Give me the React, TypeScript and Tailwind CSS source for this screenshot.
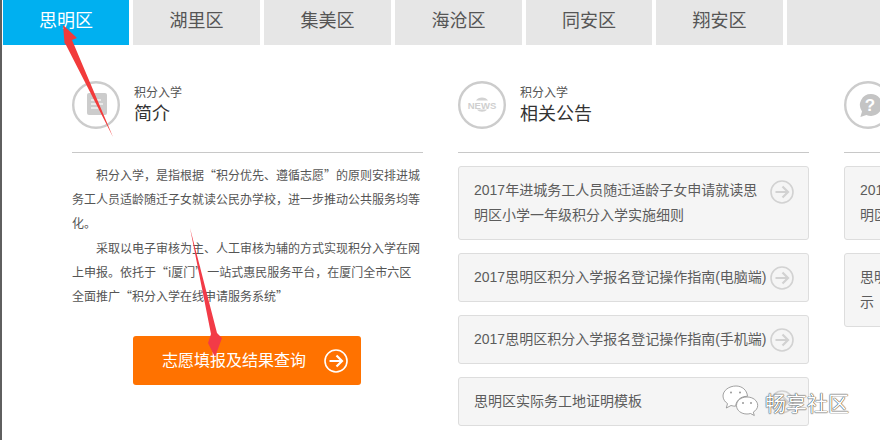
import React from 'react';

const tabs = ['思明区', '湖里区', '集美区', '海沧区', '同安区', '翔安区', ''];

const notices = [
  { title: '2017年进城务工人员随迁适龄子女申请就读思明区小学一年级积分入学实施细则', tall: true },
  { title: '2017思明区积分入学报名登记操作指南(电脑端)', tall: false },
  { title: '2017思明区积分入学报名登记操作指南(手机端)', tall: false },
  { title: '思明区实际务工地证明模板', tall: false },
];

const faqs = [
  '2017年进城务工人员随迁适龄子女申请就读思明区小学一年级积分入学实施细则',
  '思明区积分入学报名登记操作流程及相关材料公示',
];

const ArrowCircle = ({ color = '#d2d2d2', size = 24 }: { color?: string; size?: number }) => (
  <svg width={size} height={size} viewBox="0 0 24 24" fill="none" className="shrink-0">
    <circle cx="12" cy="12" r="11" stroke={color} strokeWidth="1.6" />
    <path d="M5.500 12h12M12.500 6.500l5.500 5.500-5.500 5.500" stroke={color} strokeWidth="2.200" />
  </svg>
);

const DocIcon = () => (
  <svg width="48" height="48" viewBox="0 0 48 48" fill="none">
    <circle cx="24" cy="24" r="22.800" stroke="#cccccc" strokeWidth="2.400" />
    <rect x="15" y="12" width="20" height="22" rx="2" fill="#cccccc" />
    <path d="M19 19h10M19 23h12M19 27h8" stroke="#f2f2f2" strokeWidth="1.600" />
  </svg>
);

const NewsIcon = () => (
  <svg width="48" height="48" viewBox="0 0 48 48" fill="none">
    <circle cx="24" cy="24" r="22.800" stroke="#cccccc" strokeWidth="2.400" />
    <path d="M18 19.500c2-4 10-4 12 0zM19 28.500c2 3 8 3 10 0z" fill="#d2d2d2" />
    <text x="24" y="27.500" textAnchor="middle" fontSize="9.500" fontWeight="700" fill="#cfcfcf" fontFamily="Liberation Sans, sans-serif">
      NEWS
    </text>
  </svg>
);

const QuestionIcon = () => (
  <svg width="48" height="48" viewBox="0 0 48 48" fill="none">
    <circle cx="24" cy="24" r="22.800" stroke="#cccccc" strokeWidth="2.400" />
    <path d="M27 13a11 11 0 1 1-4.600 21l-6 2 1.600-5.600A11 11 0 0 1 27 13z" fill="#c4c4c4" />
    <text x="26" y="30" textAnchor="middle" fontSize="17" fontWeight="700" fill="#ffffff" fontFamily="Liberation Sans, sans-serif">
      ?
    </text>
  </svg>
);

const SectionHead = ({ icon, title }: { icon: React.ReactNode; title?: string }) => (
  <div className="flex items-start gap-[14px] h-[72px] border-b border-[#c8c8c8]">
    {icon}
    {title && (
      <div className="pt-[3px]">
        <div className="text-xs leading-[18px] text-[#555]">积分入学</div>
        <div className="text-lg leading-[24px] text-[#333]">{title}</div>
      </div>
    )}
  </div>
);

const NoticeCard = ({ title, tall }: { title: string; tall: boolean }) => (
  <div className="flex items-center pl-[15px] pr-[14px] bg-[#f5f5f5] border border-[#dddddd] rounded-[3px] text-sm leading-[25px] text-[#5c5c5c]">
    <div className="flex-1 py-[11px]">{title}</div>
    <div className={tall ? 'self-start mt-[13px]' : ''}>
      <ArrowCircle />
    </div>
  </div>
);

const WeChatMark = () => (
  <svg width="38" height="32" viewBox="0 0 38 32" fill="#ffffff" stroke="#8a8a8a" strokeWidth="0.800">
    <path d="M14 1C7 1 1 5.500 1 11c0 3 1.800 5.800 4.500 7.600L4.300 23l4.700-2.500c1.500.5 3 .7 4.500.7 0 0 1-10 12-10C25 5 20 1 14 1z" />
    <path d="M25 12c-6 0-10.500 3.700-10.500 8.500S19 29 25 29c1.200 0 2.400-.2 3.500-.5l3.800 2-1-3.400c2.700-1.600 4.400-4 4.400-6.600C35.700 15.700 31 12 25 12z" />
    <circle cx="9" cy="7.500" r="1" fill="#999" stroke="none" />
    <circle cx="18" cy="7.500" r="1" fill="#999" stroke="none" />
    <circle cx="21" cy="18" r="1" fill="#999" stroke="none" />
    <circle cx="29" cy="18" r="1" fill="#999" stroke="none" />
  </svg>
);

export default function App() {
  return (
    <div className="relative w-[880px] h-[440px] overflow-hidden bg-white flex font-['Liberation_Sans','Noto_Sans_CJK_SC',sans-serif]">
      <div className="w-[2px] shrink-0 bg-[#5f5f5f]" />
      <div className="flex-1 min-w-0 pl-px">
        <div className="flex gap-1 h-[45px]">
          {tabs.map((tab, i) => (
            <div
              key={i}
              className={`shrink-0 flex items-center justify-center pb-[4px] text-lg ${
                i === 0 || i === 4 ? 'w-[126px]' : 'w-[127px]'
              } ${i === 0 ? 'bg-[#00b0f0] text-white' : 'bg-[#e6e6e6] text-[#555]'}`}
            >
              {tab}
            </div>
          ))}
        </div>

        <div className="flex gap-[35px] pl-[69px] pt-[36px]">
          <div className="w-[351px] shrink-0">
            <SectionHead icon={<DocIcon />} title="简介" />
            <div className="pt-[10px] pr-[2px] text-xs leading-[24.200px] text-[#555] font-['Noto_Sans_CJK_SC',sans-serif]">
              <p className="indent-[24px]">
                积分入学，是指根据“积分优先、遵循志愿”的原则安排进城务工人员适龄随迁子女就读公民办学校，进一步推动公共服务均等化。
              </p>
              <p className="indent-[24px]">
                采取以电子审核为主、人工审核为辅的方式实现积分入学在网上申报。依托于“i厦门”一站式惠民服务平台，在厦门全市六区全面推广“积分入学在线申请服务系统”
              </p>
            </div>
            <div className="ml-[61px] mt-[28px] w-[228px] h-[49px] flex items-center gap-[18px] pl-[29px] rounded-[3px] bg-[#ff7200] text-white text-base">
              <span>志愿填报及结果查询</span>
              <ArrowCircle color="#ffffff" />
            </div>
          </div>

          <div className="w-[351px] shrink-0">
            <SectionHead icon={<NewsIcon />} title="相关公告" />
            <div className="pt-[13px] flex flex-col gap-[13px]">
              {notices.map((n) => (
                <NoticeCard key={n.title} title={n.title} tall={n.tall} />
              ))}
            </div>
          </div>

          <div className="w-[351px] shrink-0">
            <SectionHead icon={<QuestionIcon />} />
            <div className="pt-[13px] flex flex-col gap-[13px]">
              {faqs.map((q) => (
                <NoticeCard key={q} title={q} tall />
              ))}
            </div>
          </div>
        </div>
      </div>

      {/* red annotation arrows drawn over the page */}
      <svg className="absolute left-0 top-0 pointer-events-none" width="880" height="440" viewBox="0 0 880 440">
        <path d="M63 25 L77 38 L72 40 L113 137 L66 45 L64.500 43 Z" fill="#f23b3b" />
        <path d="M190 228 L211 334 L208 343 L215 357 L222 338 L217 333 Z" fill="#f23b47" />
      </svg>

      {/* watermark */}
      <div className="absolute left-[722px] top-[385px] flex items-center gap-[5px]">
        <WeChatMark />
        <span className="text-[21px] leading-none pt-[4px] text-white [text-shadow:0_0_1px_#222,0_0_1px_#222]">
          畅享社区
        </span>
      </div>
    </div>
  );
}
